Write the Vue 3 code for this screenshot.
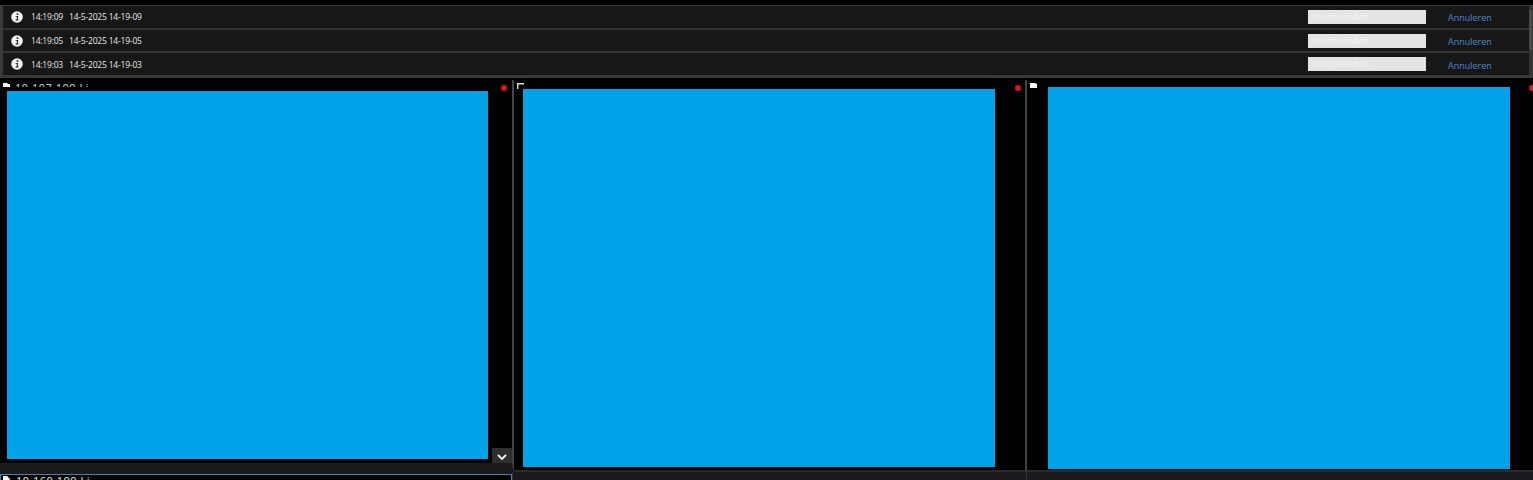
<script setup>
const rows = [
  { t: '14:19:09', d: '14-5-2025 14-19-09' },
  { t: '14:19:05', d: '14-5-2025 14-19-05' },
  { t: '14:19:03', d: '14-5-2025 14-19-03' },
]
</script>

<template>
  <div class="page">
    <section class="list">
      <div v-for="r in rows" :key="r.t" class="row">
        <svg class="info" width="12" height="12" viewBox="0 0 12 12">
          <circle cx="6" cy="6" r="5.8" fill="#f2f2f2" />
          <rect x="5.6" y="2.2" width="1.7" height="1.6" fill="#171717" />
          <path d="M4.7 5h2.4L6.7 8.6h.8l-.1.8H4.6l.1-.8h.9L6 5.800h-1.400z" fill="#171717" />
        </svg>
        <span class="time">{{ r.t }}</span>
        <span class="date">{{ r.d }}</span>
        <span class="progress">Voorbereiden...</span>
        <a class="cancel">Annuleren</a>
      </div>
      <i class="scroll"></i>
    </section>

    <section class="grid">
      <div class="cam cam1">
        <svg class="folder" width="7" height="6" viewBox="0 0 7 6"><path d="M0 0h4l1 1h2v5H0z" fill="#fff" /></svg>
        <span class="label">10.107.100 Li</span>
        <i class="dot"></i>
        <div class="video"></div>
        <button class="more">
          <svg width="12" height="8" viewBox="0 0 12 8"><path d="M2 2l4 4 4-4" fill="none" stroke="#fff" stroke-width="1.8" /></svg>
        </button>
      </div>
      <div class="cam cam2">
        <svg class="corner" width="7" height="6" viewBox="0 0 7 6"><path d="M.7 6V.7H7" fill="none" stroke="#ddd" stroke-width="1.4" /></svg>
        <i class="dot"></i>
        <div class="video"></div>
      </div>
      <div class="cam cam3">
        <svg class="folder" width="7" height="5" viewBox="0 0 7 5"><path d="M0 0h5l2 1v4H0z" fill="#fff" /></svg>
        <i class="dot"></i>
        <div class="video"></div>
      </div>
    </section>

    <section class="bottom">
      <div class="tile selected">
        <svg class="tile-icon" width="7" height="8" viewBox="0 0 7 8"><path d="M0 0h4l3 3v5H0z" fill="#fff" /></svg>
        <span class="tile-label">10.160.100 Li</span>
      </div>
      <div class="tile"></div>
      <div class="tile"></div>
    </section>
  </div>
</template>

<style scoped>
.page {
  width: 1533px;
  height: 480px;
  overflow: hidden;
  background: #000;
  display: flex;
  flex-direction: column;
  padding-top: 5px;
  box-sizing: border-box;
  font-family: "Open Sans", "Noto Sans", sans-serif;
}
.list {
  position: relative;
  height: 73px;
  flex: none;
  box-sizing: border-box;
  border: 1px solid #3a3a3a;
  border-left-width: 3px;
  border-bottom-width: 3px;
  background: #333;
  display: flex;
  flex-direction: column;
  gap: 2px;
  padding-right: 3px;
}
.row {
  flex: 1;
  background: #171717;
  display: flex;
  align-items: center;
  color: #e6e6e6;
  font-size: 8.5px;
  letter-spacing: -0.2px;
  padding-left: 8px;
}
.info { flex: none; margin-right: 8px; }
.time { width: 38px; }
.progress {
  margin-left: auto;
  width: 118px;
  height: 14px;
  line-height: 14px;
  background: #e4e4e4;
  color: #f4f4f4;
  font-size: 9px;
  padding-left: 3px;
  box-sizing: border-box;
  letter-spacing: 0;
}
.cancel {
  width: 103px;
  padding: 2px 0 0 22px;
  box-sizing: border-box;
  color: #4a8ad0;
  font-size: 9px;
  letter-spacing: 0;
}
.scroll {
  position: absolute;
  right: 0;
  top: 4px;
  width: 3px;
  height: 40px;
  background: #4a4a4a;
}
.grid {
  flex: none;
  margin-top: 2px;
  height: 392px;
  display: grid;
  grid-template-columns: 514px 513px 506px;
}
.cam {
  position: relative;
  box-sizing: border-box;
  overflow: hidden;
  background: #000;
}
.cam1 { padding: 11px 0 4px 7px; border-right: 2px solid #444; border-bottom: 9px solid #1a1a1a; }
.cam2 { padding: 9px 0 3px 9px; border-right: 2px solid #444; border-bottom: 2px solid #2a2a2a; }
.cam3 { padding: 7px 0 1px 21px; border-bottom: 2px solid #2a2a2a; }
.video {
  position: relative;
  z-index: 1;
  background: #00a2e8;
  height: 100%;
  box-shadow: 0 0 0 4px #000;
}
.cam1 .video { width: 481px; }
.cam2 .video { width: 472px; }
.cam3 .video { width: 462px; }
.folder { position: absolute; left: 3px; top: 3px; }
.corner { position: absolute; left: 3px; top: 3px; }
.label {
  position: absolute;
  left: 15px;
  top: 2px;
  color: #d8d8d8;
  font-size: 11px;
  line-height: 12px;
  letter-spacing: 0.5px;
}
.dot {
  position: absolute;
  z-index: 2;
  top: 5px;
  left: 501px;
  width: 6px;
  height: 6px;
  border-radius: 50%;
  background: #e01020;
}
.cam3 .dot { left: 502px; }
.more {
  position: absolute;
  z-index: 2;
  left: 492px;
  top: 368px;
  width: 20px;
  height: 18px;
  padding: 0;
  border: 0;
  background: #2f2f2f;
  display: flex;
  align-items: center;
  justify-content: center;
}
.bottom {
  flex: 1;
  display: grid;
  grid-template-columns: 512px 514px 507px;
  background: #1a1a1c;
}
.tile {
  position: relative;
  overflow: hidden;
  box-sizing: border-box;
  border-left: 1px solid #333;
}
.selected {
  background: #000;
  border: 1px solid #4a7fb0;
  border-bottom: 0;
  margin-top: 2px;
}
.tile-icon { position: absolute; left: 2px; top: 1px; }
.tile-label {
  position: absolute;
  left: 15px;
  top: 0;
  color: #e8e8e8;
  font-size: 11px;
  line-height: 12px;
  letter-spacing: 0.5px;
}
</style>
